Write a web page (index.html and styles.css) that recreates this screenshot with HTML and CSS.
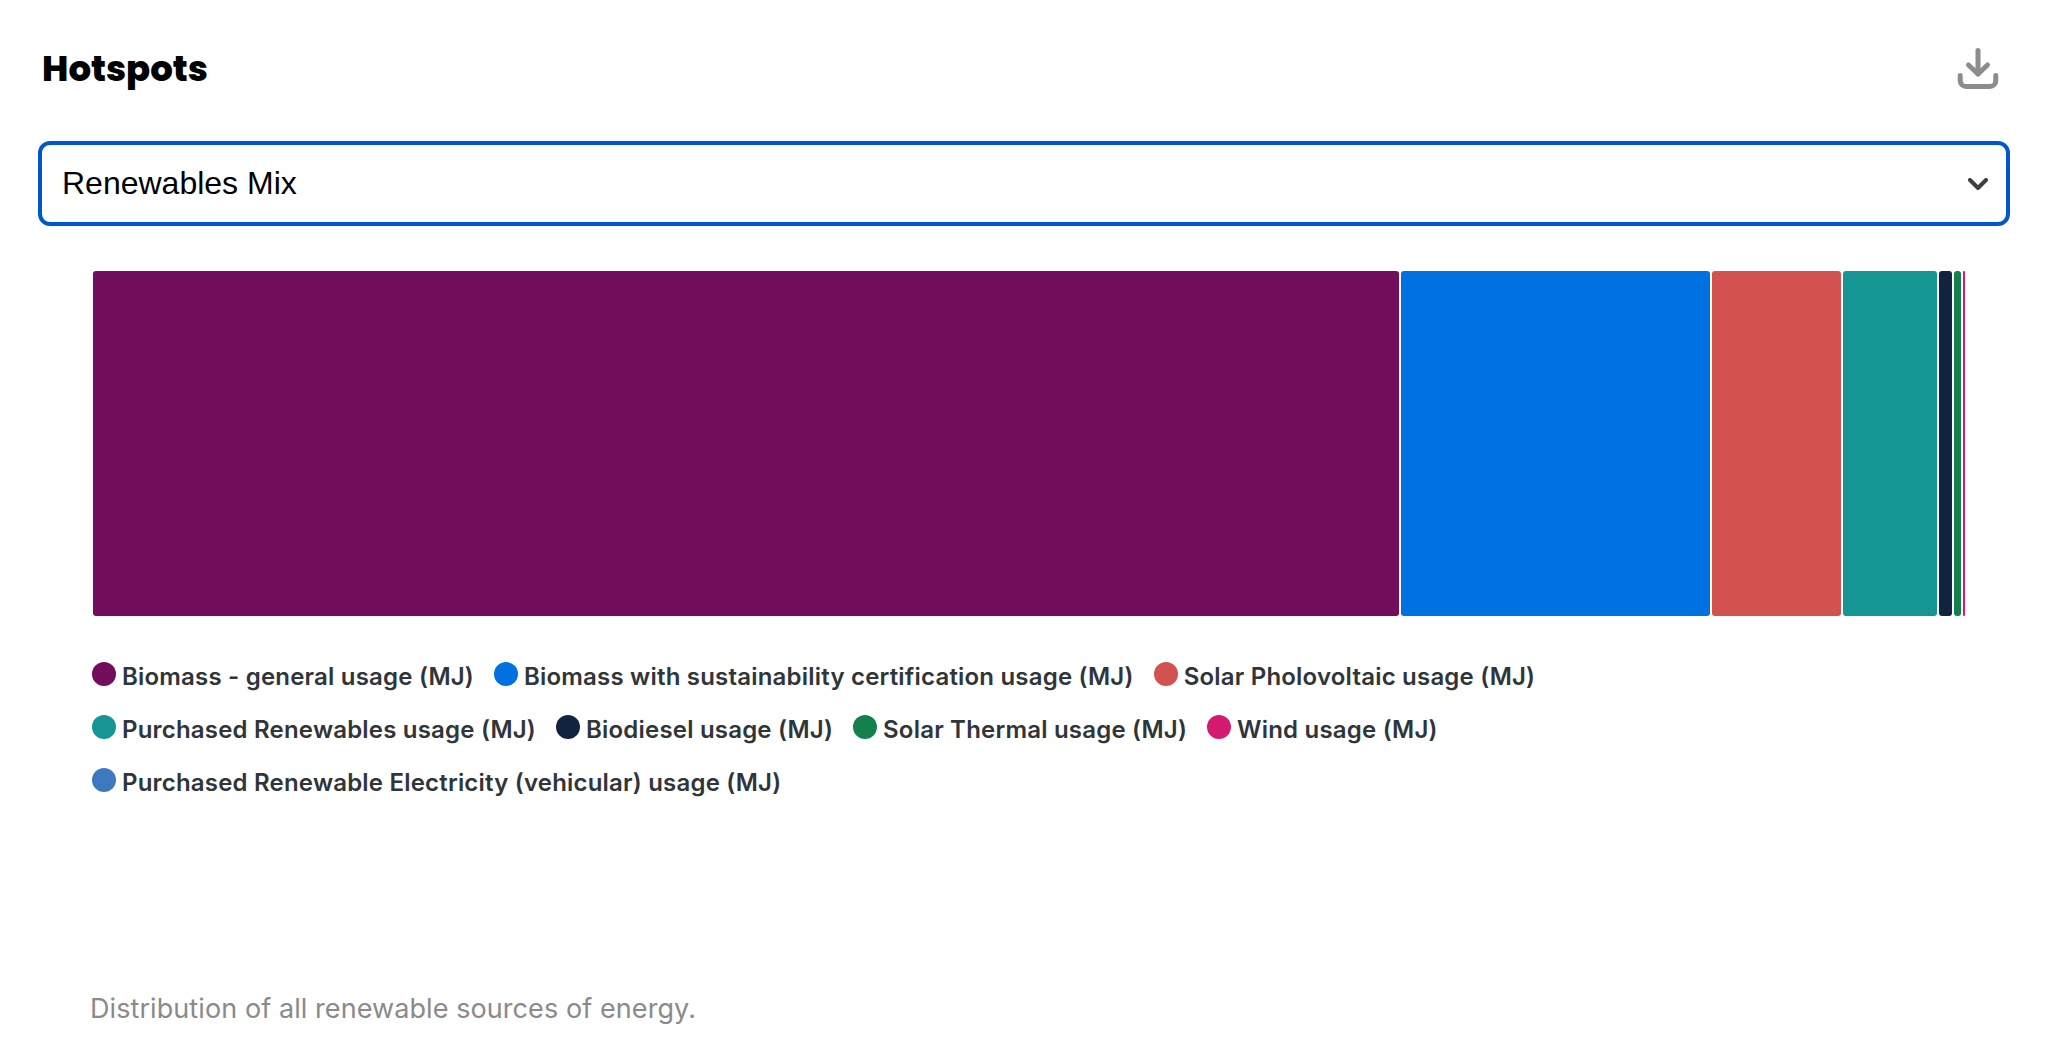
FILE: index.html
```html
<!DOCTYPE html>
<html lang="en">
<head>
    <meta charset="UTF-8">
    <title>Hotspots</title>
    <link rel="stylesheet" href="styles.css">
</head>
<body>
    <div class="card">
        <div class="card-header">
            <h2 class="card-title">Hotspots</h2>
            <button class="download-button" aria-label="Download">
                <svg width="44" height="44" viewBox="0 0 44 44" fill="none" stroke="#8c8c8c" stroke-width="5" stroke-linecap="round" stroke-linejoin="round">
                    <path d="M22 4.5V28"/>
                    <path d="M12.5 19l9.5 9 9.500-9"/>
                    <path d="M4.200 29.500v5a6 6 0 0 0 6 6h23.600a6 6 0 0 0 6-6v-5"/>
                </svg>
            </button>
        </div>

        <div class="select-box">
            <span>Renewables Mix</span>
            <svg width="20" height="12" viewBox="0 0 20 12" fill="none" stroke="#3f3f3f" stroke-width="4" stroke-linecap="round" stroke-linejoin="round">
                <path d="M2 2l8 8 8-8"/>
            </svg>
        </div>

        <div class="chart">
            <div class="bar">
                <div class="segment c-purple" style="width: 1306px"></div>
                <div class="segment c-blue" style="width: 309px"></div>
                <div class="segment c-red" style="width: 129px"></div>
                <div class="segment c-teal" style="width: 94px"></div>
                <div class="segment c-navy" style="width: 13px"></div>
                <div class="segment c-green" style="width: 7px"></div>
                <div class="segment c-pink" style="width: 1.5px"></div>
            </div>

            <div class="legend">
                <div class="legend-row">
                    <div class="legend-item"><span class="dot c-purple"></span>Biomass - general usage (MJ)</div>
                    <div class="legend-item"><span class="dot c-blue"></span>Biomass with sustainability certification usage (MJ)</div>
                    <div class="legend-item"><span class="dot c-red"></span>Solar Pholovoltaic usage (MJ)</div>
                </div>
                <div class="legend-row">
                    <div class="legend-item"><span class="dot c-teal"></span>Purchased Renewables usage (MJ)</div>
                    <div class="legend-item"><span class="dot c-navy"></span>Biodiesel usage (MJ)</div>
                    <div class="legend-item"><span class="dot c-green"></span>Solar Thermal usage (MJ)</div>
                    <div class="legend-item"><span class="dot c-pink"></span>Wind usage (MJ)</div>
                </div>
                <div class="legend-row">
                    <div class="legend-item"><span class="dot c-sky"></span>Purchased Renewable Electricity (vehicular) usage (MJ)</div>
                </div>
            </div>
        </div>

        <p class="caption">Distribution of all renewable sources of energy.</p>
    </div>
</body>
</html>
```
FILE: styles.css
```css
html, body {
    height: 100%;
}
body {
    margin: 0;
    background: #fff;
    font-family: Inter, "Liberation Sans", sans-serif;
    overflow: hidden;
}
.card {
    padding: 44px 38px 0;
}
.card-header {
    display: flex;
    justify-content: space-between;
    align-items: center;
    height: 48px;
    padding: 0 10px 0 4px;
}
.card-title {
    margin: 0;
    font-family: Poppins, Inter, "Liberation Sans", sans-serif;
    font-size: 35.5px;
    font-weight: 800;
    color: #000;
}
.download-button {
    display: flex;
    padding: 0;
    border: none;
    background: none;
    cursor: pointer;
}
.select-box {
    display: flex;
    justify-content: space-between;
    align-items: center;
    height: 85px;
    box-sizing: border-box;
    margin-top: 49px;
    padding: 0 18px 0 20px;
    border: 4px solid #0057cc;
    border-radius: 12px;
    font-family: "Liberation Sans", sans-serif;
    font-size: 32px;
    color: #000;
}
.chart {
    margin-top: 45px;
    padding-left: 55px;
}
.bar {
    display: flex;
    gap: 2px;
    height: 345px;
}
.segment {
    border-radius: 3px;
}
.legend {
    display: flex;
    flex-direction: column;
    gap: 23px;
    margin: 45px 0 0 -1px;
}
.legend-row {
    display: flex;
    gap: 20px;
}
.legend-item {
    display: flex;
    align-items: center;
    gap: 6px;
    height: 30px;
    font-size: 24px;
    font-weight: 600;
    letter-spacing: 0.2px;
    color: #2f3539;
}
.dot {
    width: 24px;
    height: 24px;
    border-radius: 50%;
    margin-top: -4px;
}
.caption {
    margin: 195px 0 0 52px;
    font-size: 27px;
    letter-spacing: 0.08px;
    color: #8a8a8a;
}
.c-purple { background: #720e5c; }
.c-blue { background: #0071e0; }
.c-red { background: #d25250; }
.c-teal { background: #169693; }
.c-navy { background: #12233f; }
.c-green { background: #14804e; }
.c-pink { background: #d41a70; }
.c-sky { background: #3e79bf; }
```
